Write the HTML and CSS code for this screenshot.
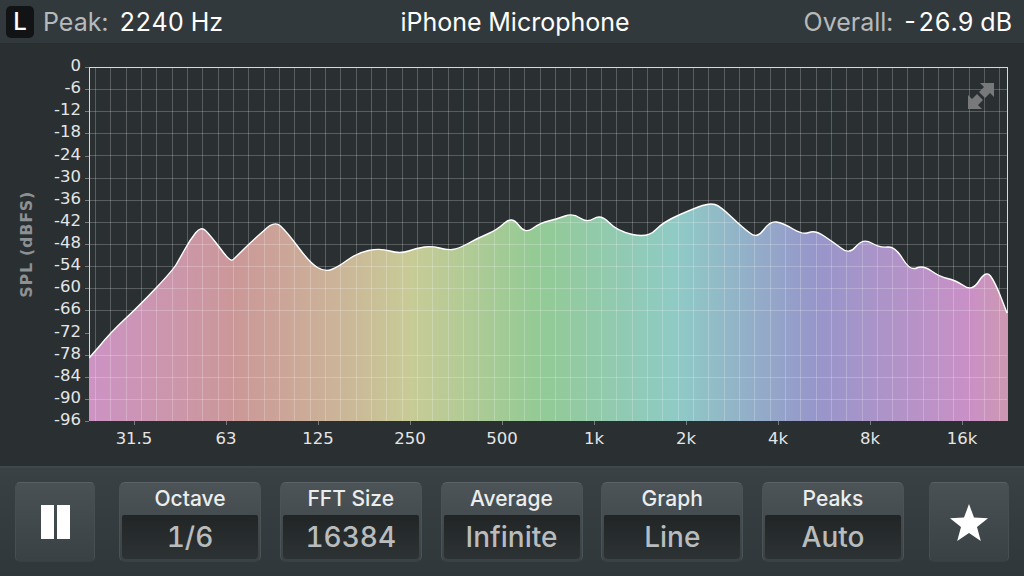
FILE: index.html
```html
<!DOCTYPE html>
<html lang="en">
  <head>
    <meta charset="UTF-8" />
    <title>iPhone Microphone - Spectrum</title>
    <link rel="stylesheet" href="styles.css">
  </head>
  <body>
    <div class="app">
      <!-- top bar -->
      <header class="top-bar">
        <div class="top-left">
          <span class="lock-badge">L</span>
          <span class="stat-label">Peak:</span>
          <span class="stat-value">2240 Hz</span>
        </div>
        <div class="top-title">iPhone Microphone</div>
        <div class="top-right">
          <span class="stat-label">Overall:</span>
          <span class="stat-value">-26.9 dB</span>
        </div>
      </header>

      <!-- chart -->
      <section class="chart">
        <div class="y-title-wrap"><span class="y-title">SPL (dBFS)</span></div>
        <div class="y-axis">
          <div class="y-label">0</div>
          <div class="y-label">-6</div>
          <div class="y-label">-12</div>
          <div class="y-label">-18</div>
          <div class="y-label">-24</div>
          <div class="y-label">-30</div>
          <div class="y-label">-36</div>
          <div class="y-label">-42</div>
          <div class="y-label">-48</div>
          <div class="y-label">-54</div>
          <div class="y-label">-60</div>
          <div class="y-label">-66</div>
          <div class="y-label">-72</div>
          <div class="y-label">-78</div>
          <div class="y-label">-84</div>
          <div class="y-label">-90</div>
          <div class="y-label">-96</div>
        </div>
        <div class="plot-col">
          <div class="plot">
            <svg class="curve" width="919" height="354" viewBox="89 67 919 354">
              <defs>
                <linearGradient id="rainbow" gradientUnits="userSpaceOnUse" x1="89" y1="0" x2="1008" y2="0">
                  <stop offset="0" stop-color="#cc93c4" />
                  <stop offset="0.16" stop-color="#cb9898" />
                  <stop offset="0.27" stop-color="#cbb498" />
                  <stop offset="0.35" stop-color="#c8cb96" />
                  <stop offset="0.49" stop-color="#93ca95" />
                  <stop offset="0.64" stop-color="#8fcac6" />
                  <stop offset="0.79" stop-color="#9696ca" />
                  <stop offset="0.96" stop-color="#ca90c6" />
                  <stop offset="1" stop-color="#cc98b0" />
                </linearGradient>
              </defs>
              <path fill="url(#rainbow)" d="M89 358 L100 345.5 Q110 333 125 319 Q140 305 156.5 287.5 Q173 270 176.5 264 Q180 258 185 249 Q190 240 195.5 233 Q201 226 205.5 230.5 Q210 235 220 248 Q230 262 232.5 260 Q235 258 244 249 Q253 240 263.5 231 Q274 220 280.5 226 Q287 232 298.5 247.5 Q310 263 317.5 267.5 Q325 272 331.5 269.5 Q338 267 347.5 260 Q357 253 368.5 250.5 Q380 248 390 251 Q400 254 408.5 251 Q417 248 424.5 247 Q432 246 439.5 248 Q447 250 452.5 249.5 Q458 249 468 243.5 Q478 238 487.5 234 Q497 230 504.5 223 Q512 216 518.5 225 Q525 234 532.5 228.5 Q540 223 548.5 221 Q557 219 565 216 Q573 213 580 218 Q587 223 594 218.5 Q601 214 609 222.5 Q617 231 632.5 234.5 Q648 238 655.5 230 Q663 222 679 215 Q695 208 702.5 205.5 Q710 203 715 204.5 Q720 206 731.5 217 Q743 228 750 233 Q757 239 763.5 230 Q770 221 776.5 222 Q783 223 793 229 Q803 235 809 232.5 Q815 230 824 236 Q833 242 841 248 Q849 255 856 246.5 Q863 238 871.5 243 Q880 248 887.5 247 Q895 246 902.5 258.5 Q910 271 916.5 268 Q923 265 931.5 271 Q940 277 947.5 278.5 Q955 280 963.5 285.5 Q972 292 979 281 Q986 270 990.5 276 Q995 282 1001 297.5 L1007 313 L1008 313 L1008 421 L89 421 Z" />
              <path fill="none" stroke="#fff" stroke-width="1.4" stroke-linejoin="round" d="M89 358 L100 345.5 Q110 333 125 319 Q140 305 156.5 287.5 Q173 270 176.5 264 Q180 258 185 249 Q190 240 195.5 233 Q201 226 205.5 230.5 Q210 235 220 248 Q230 262 232.5 260 Q235 258 244 249 Q253 240 263.5 231 Q274 220 280.5 226 Q287 232 298.5 247.5 Q310 263 317.5 267.5 Q325 272 331.5 269.5 Q338 267 347.5 260 Q357 253 368.5 250.5 Q380 248 390 251 Q400 254 408.5 251 Q417 248 424.5 247 Q432 246 439.5 248 Q447 250 452.5 249.5 Q458 249 468 243.5 Q478 238 487.5 234 Q497 230 504.5 223 Q512 216 518.5 225 Q525 234 532.5 228.5 Q540 223 548.5 221 Q557 219 565 216 Q573 213 580 218 Q587 223 594 218.5 Q601 214 609 222.5 Q617 231 632.5 234.5 Q648 238 655.5 230 Q663 222 679 215 Q695 208 702.5 205.5 Q710 203 715 204.5 Q720 206 731.5 217 Q743 228 750 233 Q757 239 763.5 230 Q770 221 776.5 222 Q783 223 793 229 Q803 235 809 232.5 Q815 230 824 236 Q833 242 841 248 Q849 255 856 246.5 Q863 238 871.5 243 Q880 248 887.5 247 Q895 246 902.5 258.5 Q910 271 916.5 268 Q923 265 931.5 271 Q940 277 947.5 278.5 Q955 280 963.5 285.5 Q972 292 979 281 Q986 270 990.5 276 Q995 282 1001 297.5 L1007 313" />
            </svg>
            <svg class="expand-icon" width="26" height="26" viewBox="0 0 26 26">
              <path fill="#77797b" d="M12 0 H26 V14 L22 10 L17 15 L11 9 L16 4 Z" />
              <path fill="#77797b" d="M0 12 V26 H14 L10 22 L15 17 L9 11 L4 16 Z" />
            </svg>
          </div>
          <div class="x-axis">
            <div class="x-label">31.5</div>
            <div class="x-label">63</div>
            <div class="x-label">125</div>
            <div class="x-label">250</div>
            <div class="x-label">500</div>
            <div class="x-label">1k</div>
            <div class="x-label">2k</div>
            <div class="x-label">4k</div>
            <div class="x-label">8k</div>
            <div class="x-label">16k</div>
          </div>
        </div>
      </section>

      <!-- bottom toolbar -->
      <footer class="toolbar">
        <button class="icon-btn">
          <span class="pause-bar"></span>
          <span class="pause-bar"></span>
        </button>
        <div class="selectors">
          <div class="selector">
            <div class="selector-name">Octave</div>
            <div class="selector-value">1/6</div>
          </div>
          <div class="selector">
            <div class="selector-name">FFT Size</div>
            <div class="selector-value">16384</div>
          </div>
          <div class="selector">
            <div class="selector-name">Average</div>
            <div class="selector-value">Infinite</div>
          </div>
          <div class="selector">
            <div class="selector-name">Graph</div>
            <div class="selector-value">Line</div>
          </div>
          <div class="selector">
            <div class="selector-name">Peaks</div>
            <div class="selector-value">Auto</div>
          </div>
        </div>
        <button class="icon-btn">
          <svg width="38" height="37" viewBox="0 0 38 37">
            <polygon fill="#fff" points="19,0 24,13.6 38,14.2 27,23 30.8,37 19,29 7.2,37 11,23 0,14.2 14,13.6" />
          </svg>
        </button>
      </footer>
    </div>
  </body>
</html>
```

FILE: styles.css
```css
:root {
  --top-bg: #31393d;
  --chart-bg: #2a2f31;
  --label: #b7babb;
  --axis: #e4e6e6;
  --grid: rgba(255, 255, 255, 0.22);
}

* {
  margin: 0;
  padding: 0;
  box-sizing: border-box;
}

body {
  font-family: Inter, "Liberation Sans", sans-serif;
  background-color: var(--chart-bg);
  color: #fff;
  overflow: hidden;
  width: 1024px;
  height: 576px;
}

.app {
  width: 100%;
  height: 100%;
  display: flex;
  flex-direction: column;
}

/* top bar */
.top-bar {
  height: 43px;
  flex: none;
  background: var(--top-bg);
  display: grid;
  grid-template-columns: 1fr auto 1fr;
  align-items: center;
  padding: 0 12px 0 6px;
  font-size: 25px;
  font-feature-settings: "tnum";
}

.top-left,
.top-right {
  display: flex;
  align-items: center;
}

.top-right {
  justify-content: flex-end;
}

.lock-badge {
  width: 28px;
  height: 32px;
  margin-right: 9px;
  border-radius: 5px;
  background: #111314;
  display: flex;
  align-items: center;
  justify-content: center;
  font-size: 24px;
  font-weight: 500;
}

.stat-label {
  color: var(--label);
  margin-right: 11px;
}

.top-right .stat-label {
  margin-right: 9px;
}

.stat-value,
.top-title {
  color: #fff;
}

.top-title {
  margin-left: 12px;
}

/* chart */
.chart {
  flex: 1;
  display: flex;
  align-items: flex-start;
  padding-top: 24px;
}

.y-title-wrap {
  width: 36px;
  height: 354px;
  display: flex;
  align-items: center;
  justify-content: center;
  padding-left: 16px;
}

.y-title {
  writing-mode: vertical-rl;
  transform: rotate(180deg);
  font-family: "DejaVu Sans", sans-serif;
  font-size: 16px;
  font-weight: 700;
  letter-spacing: 0.7px;
  color: #8d9193;
  white-space: nowrap;
}

.y-axis {
  width: 53px;
  height: 354px;
  flex: none;
}

.y-label {
  position: relative;
  height: 22.125px;
  line-height: 22px;
  transform: translateY(-12px);
  padding-right: 8px;
  text-align: right;
  font-family: "DejaVu Sans", sans-serif;
  font-size: 16.5px;
  color: var(--axis);
}

.y-label::after {
  content: "";
  position: absolute;
  right: 0;
  top: 12px;
  width: 4px;
  height: 1px;
  background: #777b7d;
}

.plot-col {
  width: 919px;
  flex: none;
}

.plot {
  position: relative;
  width: 919px;
  height: 354px;
  border: solid #d8dada;
  border-width: 1px 1px 0 1px;
  box-sizing: border-box;
}

.plot::before,
.plot::after {
  content: "";
  position: absolute;
  z-index: 1;
  pointer-events: none;
}

.plot::before {
  inset: 0;
  background: repeating-linear-gradient(
    to bottom,
    transparent 0,
    transparent 21.125px,
    var(--grid) 21.125px,
    var(--grid) 22.125px
  );
}

.plot::after {
  inset: 0 0 0 5px;
  background: repeating-linear-gradient(
    to right,
    var(--grid) 0,
    var(--grid) 1px,
    transparent 1px,
    transparent 15.33px
  );
}

.curve {
  display: block;
  margin: -1px;
}

.expand-icon {
  position: absolute;
  z-index: 2;
  top: 15px;
  right: 13px;
}

.x-axis {
  display: flex;
  margin-left: -1px;
  background: var(--chart-bg);
}

.x-label {
  position: relative;
  width: 92px;
  padding-top: 8px;
  text-align: center;
  font-family: "DejaVu Sans", sans-serif;
  font-size: 16.5px;
  line-height: 20px;
  color: var(--axis);
}

.x-label::before {
  content: "";
  position: absolute;
  top: 0;
  left: 46px;
  width: 1px;
  height: 4px;
  background: #777b7d;
}

/* bottom toolbar */
.toolbar {
  height: 110px;
  flex: none;
  display: flex;
  align-items: center;
  padding: 0 15px;
  border-top: 2px solid #40484b;
  background: linear-gradient(to bottom, #394145, #30373a);
}

.icon-btn {
  width: 80px;
  height: 80px;
  flex: none;
  display: flex;
  align-items: center;
  justify-content: center;
  gap: 3px;
  border: 1px solid;
  border-color: #596165 #484f52 #383e41;
  border-radius: 5px;
  background: linear-gradient(to bottom, #495155, #3a4144);
}

.pause-bar {
  width: 13px;
  height: 34px;
  background: #fff;
}

.selectors {
  flex: 1;
  display: flex;
  gap: 18.75px;
  margin: 0 25px 0 24px;
}

.selector {
  width: 142px;
  height: 80px;
  display: flex;
  flex-direction: column;
  border: 1px solid;
  border-color: #5c6468 #4c5357 #3a4043;
  border-radius: 6px;
  padding: 0 2px 2px;
  background: linear-gradient(to bottom, #4c5458, #3b4245);
}

.selector-name {
  height: 32px;
  flex: none;
  display: flex;
  align-items: center;
  justify-content: center;
  padding-bottom: 2px;
  font-size: 21px;
  font-weight: 500;
  color: #eceded;
}

.selector-value {
  flex: 1;
  display: flex;
  align-items: center;
  justify-content: center;
  border-radius: 2px 2px 4px 4px;
  background: linear-gradient(to bottom, #212526, #2d3234);
  font-size: 28px;
  font-weight: 500;
  font-feature-settings: "tnum";
  color: #b9bcbd;
}
```
